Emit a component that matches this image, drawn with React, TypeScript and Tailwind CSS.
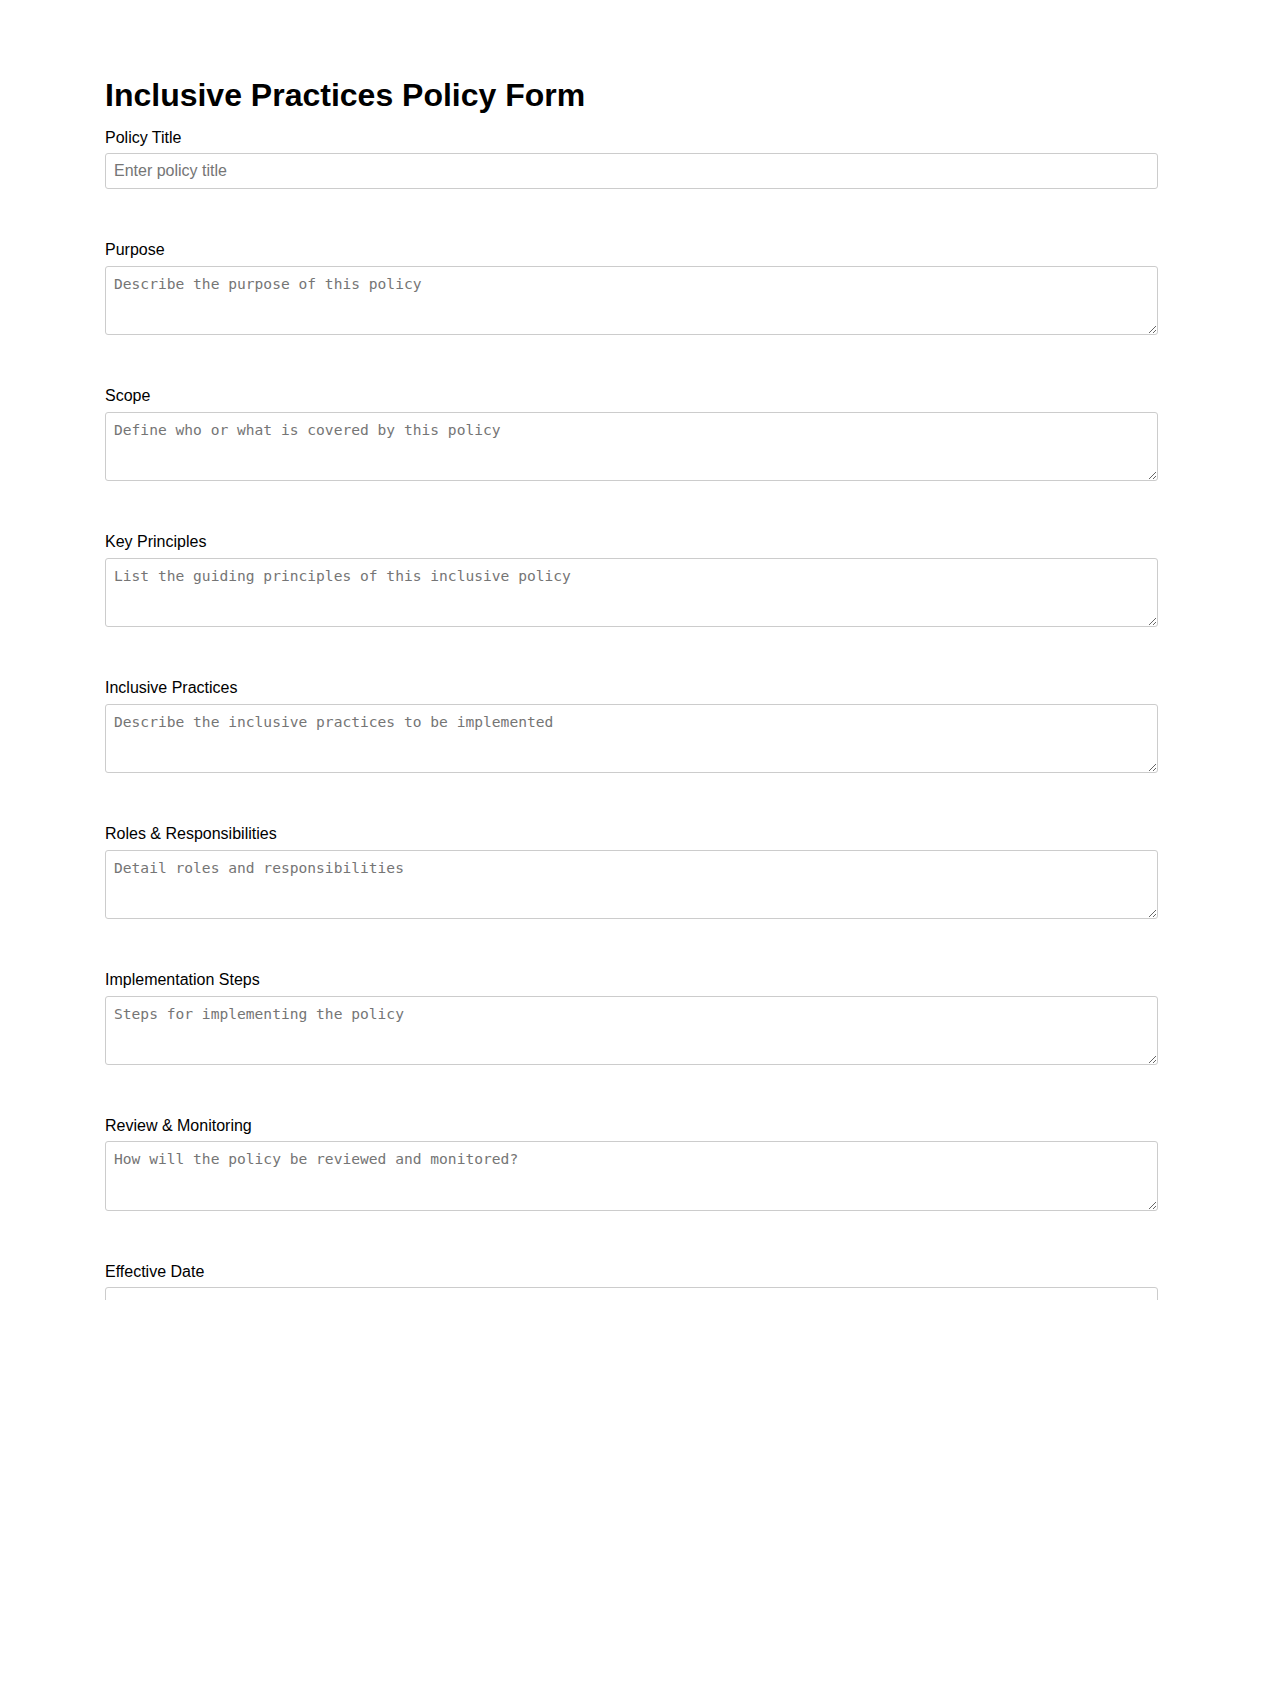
import { useState } from "react";

type Field = {
  id: string;
  label: string;
  placeholder: string;
  kind: "text" | "textarea" | "date";
};

const fields: Field[] = [
  { id: "title", label: "Policy Title", placeholder: "Enter policy title", kind: "text" },
  { id: "purpose", label: "Purpose", placeholder: "Describe the purpose of this policy", kind: "textarea" },
  { id: "scope", label: "Scope", placeholder: "Define who or what is covered by this policy", kind: "textarea" },
  {
    id: "principles",
    label: "Key Principles",
    placeholder: "List the guiding principles of this inclusive policy",
    kind: "textarea",
  },
  {
    id: "practices",
    label: "Inclusive Practices",
    placeholder: "Describe the inclusive practices to be implemented",
    kind: "textarea",
  },
  { id: "roles", label: "Roles & Responsibilities", placeholder: "Detail roles and responsibilities", kind: "textarea" },
  { id: "steps", label: "Implementation Steps", placeholder: "Steps for implementing the policy", kind: "textarea" },
  {
    id: "review",
    label: "Review & Monitoring",
    placeholder: "How will the policy be reviewed and monitored?",
    kind: "textarea",
  },
  { id: "date", label: "Effective Date", placeholder: "", kind: "date" },
];

export default function App() {
  const [values, setValues] = useState<Record<string, string>>({});

  function update(id: string, value: string) {
    setValues((current) => ({ ...current, [id]: value }));
  }

  return (
    <div className="min-h-[1681px] bg-white font-['Liberation_Sans',Arial,sans-serif] text-black">
      <div className="h-[1300px] overflow-hidden px-[105px] pt-[77px]">
        <h1 className="mb-[15px] text-[32px] font-bold leading-[1.15]">Inclusive Practices Policy Form</h1>

        <form className="flex flex-col gap-[52px]" onSubmit={(event) => event.preventDefault()}>
          {fields.map((field) => (
            <div key={field.id} className="flex flex-col">
              <label htmlFor={field.id} className="mb-[6px] text-base leading-[1.15]">
                {field.label}
              </label>
              {field.kind === "textarea" ? (
                <textarea
                  id={field.id}
                  placeholder={field.placeholder}
                  value={values[field.id] ?? ""}
                  onChange={(event) => update(field.id, event.target.value)}
                  className="block h-[69.6px] w-full rounded-[3px] border border-[#cccccc] px-2 py-2 font-['DejaVu_Sans_Mono',monospace] text-[14.6px] leading-[1.164] placeholder:text-[#757575]"
                />
              ) : field.kind === "date" ? (
                <input
                  id={field.id}
                  type="date"
                  value={values[field.id] ?? ""}
                  onChange={(event) => update(field.id, event.target.value)}
                  className="block w-full rounded-[3px] border border-[#cccccc] px-2 py-2 text-base"
                />
              ) : (
                <input
                  id={field.id}
                  type="text"
                  placeholder={field.placeholder}
                  value={values[field.id] ?? ""}
                  onChange={(event) => update(field.id, event.target.value)}
                  className="block h-[36px] w-full rounded-[3px] border border-[#cccccc] px-2 text-base placeholder:text-[#757575]"
                />
              )}
            </div>
          ))}
        </form>
      </div>
    </div>
  );
}
